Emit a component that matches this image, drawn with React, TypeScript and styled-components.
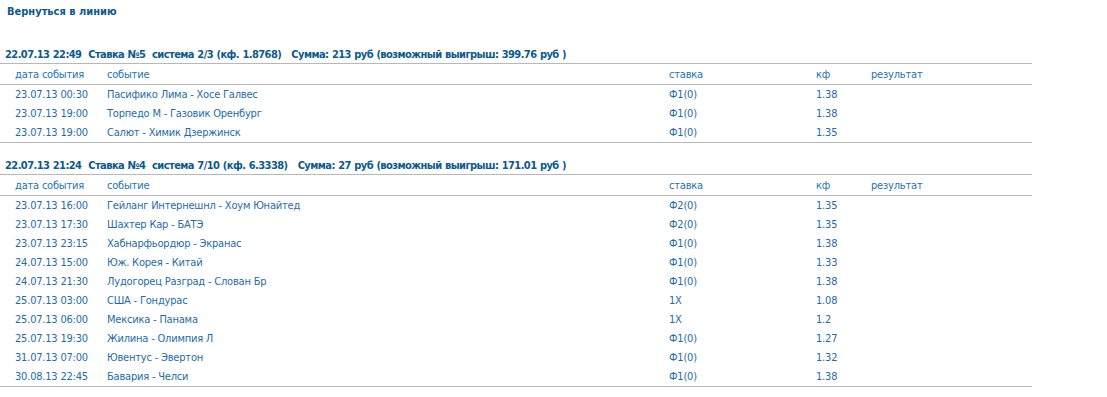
import React from 'react';
import styled, { createGlobalStyle } from 'styled-components';

const GlobalStyle = createGlobalStyle`
  body {
    margin: 0;
    background: #ffffff;
    font-family: "DejaVu Sans Condensed", "Liberation Sans", sans-serif;
    font-size: 11px;
    color: #1d6cab;
  }
`;

const Page = styled.div`
  padding: 5px 0 0 0;
`;

const BackLink = styled.a`
  display: block;
  padding: 0 7px;
  line-height: 14px;
  font-weight: bold;
  color: #0c5a8e;
  text-decoration: none;
  cursor: pointer;
`;

const BetBlock = styled.section`
  width: 1032px;
  margin-top: 11px;
  border-bottom: 1px solid #b8b8b8;
  &:first-of-type {
    margin-top: 24px;
  }
`;

const BetTitle = styled.div`
  height: 18px;
  padding-top: 2px;
  line-height: 20px;
  padding-left: 5px;
  font-weight: bold;
  letter-spacing: -0.56px;
  word-spacing: 0.5px;
  color: #0c5a8e;
  white-space: pre;
  border-bottom: 1px solid #b8b8b8;
`;

const Row = styled.div<{ $head?: boolean }>`
  display: grid;
  grid-template-columns: 107px 562px 147px 55px 1fr;
  height: 19px;
  padding-top: ${(p) => (p.$head ? '1px' : '0')};
  line-height: ${(p) => (p.$head ? '20px' : '19px')};
  letter-spacing: -0.2px;
  border-bottom: ${(p) => (p.$head ? '1px solid #b8b8b8' : 'none')};
  color: ${(p) => (p.$head ? '#2474b3' : '#1d6cab')};
`;

const Cell = styled.span<{ $first?: boolean }>`
  padding-left: ${(p) => (p.$first ? '15px' : '0')};
  white-space: nowrap;
`;

type Event = [string, string, string, string];

interface Bet {
  title: string;
  events: Event[];
}

const bets: Bet[] = [
  {
    title: '22.07.13 22:49  Ставка №5  система 2/3 (кф. 1.8768)   Сумма: 213 руб (возможный выигрыш: 399.76 руб )',
    events: [
      ['23.07.13 00:30', 'Пасифико Лима - Хосе Галвес', 'Ф1(0)', '1.38'],
      ['23.07.13 19:00', 'Торпедо М - Газовик Оренбург', 'Ф1(0)', '1.38'],
      ['23.07.13 19:00', 'Салют - Химик Дзержинск', 'Ф1(0)', '1.35'],
    ],
  },
  {
    title: '22.07.13 21:24  Ставка №4  система 7/10 (кф. 6.3338)   Сумма: 27 руб (возможный выигрыш: 171.01 руб )',
    events: [
      ['23.07.13 16:00', 'Гейланг Интернешнл - Хоум Юнайтед', 'Ф2(0)', '1.35'],
      ['23.07.13 17:30', 'Шахтер Кар - БАТЭ', 'Ф2(0)', '1.35'],
      ['23.07.13 23:15', 'Хабнарфьордюр - Экранас', 'Ф1(0)', '1.38'],
      ['24.07.13 15:00', 'Юж. Корея - Китай', 'Ф1(0)', '1.33'],
      ['24.07.13 21:30', 'Лудогорец Разград - Слован Бр', 'Ф1(0)', '1.38'],
      ['25.07.13 03:00', 'США - Гондурас', '1X', '1.08'],
      ['25.07.13 06:00', 'Мексика - Панама', '1X', '1.2'],
      ['25.07.13 19:30', 'Жилина - Олимпия Л', 'Ф1(0)', '1.27'],
      ['31.07.13 07:00', 'Ювентус - Эвертон', 'Ф1(0)', '1.32'],
      ['30.08.13 22:45', 'Бавария - Челси', 'Ф1(0)', '1.38'],
    ],
  },
];

const BetTable: React.FC<{ bet: Bet }> = ({ bet }) => (
  <BetBlock>
    <BetTitle>{bet.title}</BetTitle>
    <Row $head>
      <Cell $first>дата события</Cell>
      <Cell>событие</Cell>
      <Cell>ставка</Cell>
      <Cell>кф</Cell>
      <Cell>результат</Cell>
    </Row>
    {bet.events.map((ev, i) => (
      <Row key={i}>
        <Cell $first>{ev[0]}</Cell>
        <Cell>{ev[1]}</Cell>
        <Cell>{ev[2]}</Cell>
        <Cell>{ev[3]}</Cell>
        <Cell />
      </Row>
    ))}
  </BetBlock>
);

export default function App() {
  return (
    <>
      <GlobalStyle />
      <Page>
        <BackLink>Вернуться в линию</BackLink>
        {bets.map((b, i) => (
          <BetTable key={i} bet={b} />
        ))}
      </Page>
    </>
  );
}
